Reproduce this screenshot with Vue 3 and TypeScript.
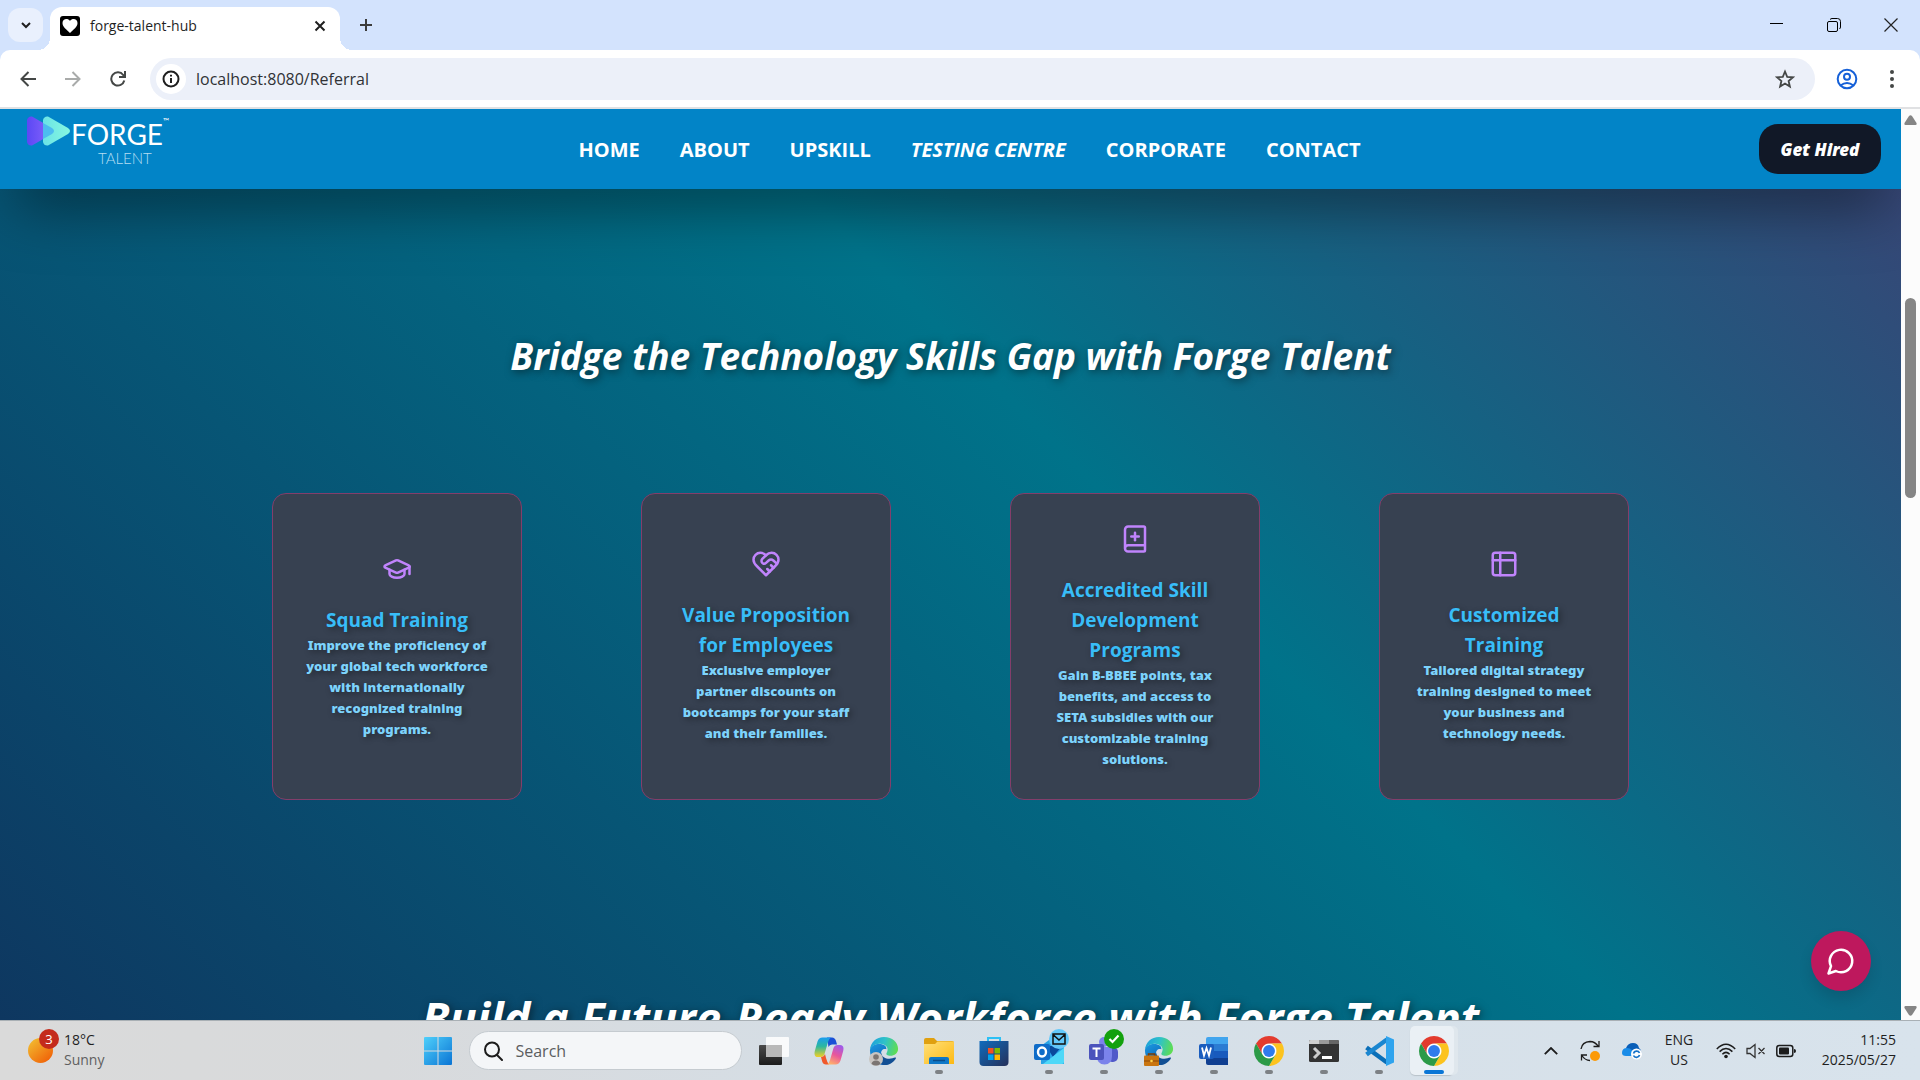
<script setup lang="ts">
import { ref } from 'vue'

interface NavItem {
  label: string
  italic?: boolean
}

interface Benefit {
  icon: 'cap' | 'heart' | 'book' | 'table'
  title: string
  text: string
}

const address = ref('localhost:8080/Referral')
const query = ref('')

const navItems: NavItem[] = [
  { label: 'HOME' },
  { label: 'ABOUT' },
  { label: 'UPSKILL' },
  { label: 'TESTING CENTRE', italic: true },
  { label: 'CORPORATE' },
  { label: 'CONTACT' },
]

const benefits: Benefit[] = [
  {
    icon: 'cap',
    title: 'Squad Training',
    text: 'Improve the proficiency of\nyour global tech workforce\nwith internationally\nrecognized training\nprograms.',
  },
  {
    icon: 'heart',
    title: 'Value Proposition\nfor Employees',
    text: 'Exclusive employer\npartner discounts on\nbootcamps for your staff\nand their families.',
  },
  {
    icon: 'book',
    title: 'Accredited Skill\nDevelopment\nPrograms',
    text: 'Gain B-BBEE points, tax\nbenefits, and access to\nSETA subsidies with our\ncustomizable training\nsolutions.',
  },
  {
    icon: 'table',
    title: 'Customized\nTraining',
    text: 'Tailored digital strategy\ntraining designed to meet\nyour business and\ntechnology needs.',
  },
]
</script>

<template>
  <div class="desktop">
    <svg class="defs" width="0" height="0" aria-hidden="true">
      <defs>
        <linearGradient id="edgeTop" x1="0" y1="0.3" x2="1" y2="0.5">
          <stop offset="0" stop-color="#1ba0dc" />
          <stop offset="0.5" stop-color="#2fc2c8" />
          <stop offset="1" stop-color="#5fdd52" />
        </linearGradient>
        <linearGradient id="edgeLow" x1="0" y1="0" x2="0.6" y2="1">
          <stop offset="0" stop-color="#1c9ae0" />
          <stop offset="1" stop-color="#0a5cb4" />
        </linearGradient>
        <linearGradient id="sun" x1="0.1" y1="0.1" x2="0.8" y2="0.9">
          <stop offset="0" stop-color="#f2b92f" />
          <stop offset="1" stop-color="#f0660a" />
        </linearGradient>
        <linearGradient id="win" x1="0" y1="0" x2="1" y2="1">
          <stop offset="0" stop-color="#4fd0fb" />
          <stop offset="1" stop-color="#0a74d4" />
        </linearGradient>
        <linearGradient id="folder" x1="0" y1="0" x2="1" y2="1">
          <stop offset="0" stop-color="#ffe07a" />
          <stop offset="1" stop-color="#fdb913" />
        </linearGradient>
        <linearGradient id="bag" x1="0" y1="0" x2="1" y2="1">
          <stop offset="0" stop-color="#0f6cbd" />
          <stop offset="1" stop-color="#25305a" />
        </linearGradient>
        <linearGradient id="copA" x1="0" y1="0" x2="0" y2="1">
          <stop offset="0" stop-color="#1b9cf0" />
          <stop offset="0.45" stop-color="#2bb7a0" />
          <stop offset="1" stop-color="#f3d024" />
        </linearGradient>
        <linearGradient id="copB" x1="0.7" y1="0" x2="0.3" y2="1">
          <stop offset="0" stop-color="#a05be8" />
          <stop offset="0.5" stop-color="#e8569b" />
          <stop offset="1" stop-color="#ffb06a" />
        </linearGradient>
        <linearGradient id="dark" x1="0" y1="0" x2="0" y2="1">
          <stop offset="0" stop-color="#4a4a4a" />
          <stop offset="1" stop-color="#1c1c1c" />
        </linearGradient>
        <linearGradient id="violet" x1="0" y1="0" x2="1" y2="0">
          <stop offset="0" stop-color="#5b48f5" />
          <stop offset="1" stop-color="#8d68fb" />
        </linearGradient>
        <linearGradient id="mint" x1="0" y1="0" x2="1" y2="0">
          <stop offset="0" stop-color="#6ae3e6" />
          <stop offset="1" stop-color="#86f8e0" />
        </linearGradient>
      </defs>
      <symbol id="chrome" viewBox="0 0 48 48">
        <circle cx="24" cy="24" r="12" fill="#fff" />
        <path fill="#e33b2e" d="M24 12H44.78A24 24 0 0 0 3.22 12L13.61 30A12 12 0 0 1 24 12Z" />
        <path fill="#fcc31e" d="M34.39 30 24 48A24 24 0 0 0 44.78 12H24A12 12 0 0 1 34.39 30Z" />
        <path fill="#2b9a47" d="M13.61 30 3.22 12A24 24 0 0 0 24 48L34.39 30A12 12 0 0 1 13.61 30Z" />
        <circle cx="24" cy="24" r="9.5" fill="#2f7bec" />
      </symbol>
      <symbol id="edge" viewBox="0 0 32 32">
        <path fill="url(#edgeLow)" d="M1 15C2 10.500 6 8.500 11 8.500C16 8.500 19 11 18.500 14C15 13 12.500 15.500 13 19C14 25 20 27.500 25 27C22.500 30 19 31 16 31C7.500 31 1 24.500 1 15Z" />
        <path fill="#124f94" d="M13 18C13.500 23 20 25.500 25 23.800C27.500 22.800 29.600 22.600 28.400 24.600C25.500 29 20.500 31.500 15 31C11.500 29 9.500 24 13 18Z" />
        <path fill="url(#edgeTop)" d="M1 15C1.500 6.500 8 1 16 1C25 1 31 7 31 13.500C31 18.500 27 21 23 21C19.500 21 17.800 19.600 18.800 18C20 16 20.500 13.500 18.500 11C16.500 8.800 14 8 11 8.200C6 8.500 2.500 11 1 15Z" />
      </symbol>
    </svg>

    <div class="tabstrip">
      <button class="tab-search" aria-label="Search tabs">
        <svg width="12" height="12" viewBox="0 0 12 12" fill="none" stroke="#1f1f1f" stroke-width="2"><path d="M2 4l4 4 4-4" /></svg>
      </button>
      <div class="tab">
        <svg width="20" height="20" viewBox="0 0 20 20">
          <rect width="20" height="20" rx="3" fill="#000" />
          <path fill="#fff" d="M10 17C6.500 13.500 2.500 11 2.500 7C2.500 2.500 8 2 10 5C12 2 17.500 2.500 17.500 7C17.500 11 13.500 13.500 10 17Z" />
        </svg>
        <span class="tab-title">forge-talent-hub</span>
        <button class="icon-button" aria-label="Close tab">
          <svg width="12" height="12" viewBox="0 0 12 12" stroke="#1f1f1f" stroke-width="2"><path d="M1.500 1.500l9 9M10.500 1.500l-9 9" /></svg>
        </button>
      </div>
      <button class="icon-button new-tab" aria-label="New tab">
        <svg width="14" height="14" viewBox="0 0 14 14" stroke="#3c3c3c" stroke-width="2"><path d="M7 1v12M1 7h12" /></svg>
      </button>
      <div class="window-buttons">
        <button class="icon-button" aria-label="Minimize">
          <svg width="14" height="14" viewBox="0 0 14 14" stroke="#000" fill="none"><path d="M0 5.500h13" /></svg>
        </button>
        <button class="icon-button" aria-label="Restore">
          <svg width="14" height="14" viewBox="0 0 14 14" stroke="#000" fill="none"><rect x="0.500" y="3.500" width="10" height="10" rx="1.500" /><path d="M3 1.500Q4 .5 5 .5H10.500Q13.500 .5 13.500 3.500V9Q13.500 10 12.500 11" /></svg>
        </button>
        <button class="icon-button" aria-label="Close">
          <svg width="14" height="14" viewBox="0 0 14 14" stroke="#222" stroke-width="1.200"><path d="M.5 .5l13 13M13.500 .5l-13 13" /></svg>
        </button>
      </div>
    </div>

    <div class="toolbar-back">
      <div class="toolbar">
        <button class="icon-button nav-icon" aria-label="Back">
          <svg width="16" height="16" viewBox="0 0 16 16" fill="none" stroke="#444746" stroke-width="2"><path d="M16 8H2M8.500 1L1.500 8l7 7" /></svg>
        </button>
        <button class="icon-button nav-icon" aria-label="Forward">
          <svg width="16" height="16" viewBox="0 0 16 16" fill="none" stroke="#a9abaa" stroke-width="2"><path d="M0 8h14M7.500 1l7 7-7 7" /></svg>
        </button>
        <button class="icon-button nav-icon" aria-label="Reload">
          <svg width="16" height="16" viewBox="0 0 16 16" fill="none" stroke="#444746" stroke-width="2"><path d="M14.300 9.500A6.600 6.600 0 1 1 13.200 4L15 6" /><path d="M15 0v6H9" /></svg>
        </button>
        <div class="address-bar">
          <button class="site-info" aria-label="Site information">
            <svg width="18" height="18" viewBox="0 0 18 18" fill="none" stroke="#1f1f1f" stroke-width="2"><circle cx="9" cy="9" r="7.500" /><path d="M9 8v5M9 4.800v1.700" /></svg>
          </button>
          <input v-model="address" class="address" type="text" aria-label="Address" />
          <button class="icon-button" aria-label="Bookmark">
            <svg width="20" height="20" viewBox="0 0 20 20" fill="none" stroke="#444746" stroke-width="1.800"><path d="M10 2.500l2.200 5.300 5.700.5-4.300 3.700 1.300 5.600-4.900-3-4.900 3 1.300-5.600-4.300-3.700 5.700-.5z" /></svg>
          </button>
        </div>
        <button class="icon-button profile" aria-label="Profile">
          <svg width="22" height="22" viewBox="0 0 22 22" fill="none" stroke="#1560d8" stroke-width="2"><circle cx="11" cy="11" r="9.300" /><circle cx="11" cy="8.800" r="3" /><path d="M4.500 17.500Q11 12.500 17.500 17.500" /></svg>
        </button>
        <button class="icon-button menu" aria-label="Menu">
          <svg width="4" height="18" viewBox="0 0 4 18" fill="#444746"><circle cx="2" cy="2" r="2" /><circle cx="2" cy="9" r="2" /><circle cx="2" cy="16" r="2" /></svg>
        </button>
      </div>
    </div>

    <div class="viewport">
      <div class="page">
        <header class="site-header">
          <a class="logo" href="#" aria-label="Forge Talent">
            <span class="logo-row">
              <svg width="44" height="30" viewBox="0 0 44 30">
                <path fill="url(#violet)" d="M0 4Q1 0 5 .5L25 12Q29 15 25 18L5 29.500Q1 30 0 26Z" />
                <path fill="url(#mint)" d="M16 4Q17 0 21 .5L41 12Q45 15 41 18L21 29.500Q17 30 16 26Z" />
                <path fill="#4cbcf0" d="M16 7L25 12Q29 15 25 18L16 23Z" />
              </svg>
              <span class="logo-name">FORGE</span>
              <span class="logo-tm">™</span>
            </span>
            <span class="logo-sub">TALENT</span>
          </a>
          <nav class="site-nav">
            <a v-for="item in navItems" :key="item.label" href="#" :class="{ italic: item.italic }">{{ item.label }}</a>
          </nav>
          <button class="hire">Get Hired</button>
        </header>

        <main class="content">
          <h1>Bridge the Technology Skills Gap with Forge Talent</h1>
          <div class="cards">
            <article v-for="b in benefits" :key="b.title" class="card">
              <svg class="card-icon" width="30" height="30" viewBox="0 0 24 24" fill="none" stroke="currentColor" stroke-width="2" stroke-linecap="round" stroke-linejoin="round">
                <g v-if="b.icon === 'cap'">
                  <path d="M21.420 10.922a1 1 0 0 0-.019-1.838L12.830 5.180a2 2 0 0 0-1.660 0L2.600 9.080a1 1 0 0 0 0 1.832l8.570 3.908a2 2 0 0 0 1.660 0z" />
                  <path d="M22 10v6" />
                  <path d="M6 12.500V16a6 3 0 0 0 12 0v-3.500" />
                </g>
                <g v-else-if="b.icon === 'heart'">
                  <path d="M19 14c1.490-1.460 3-3.210 3-5.500A5.500 5.500 0 0 0 16.500 3c-1.760 0-3 .5-4.500 2-1.500-1.500-2.740-2-4.500-2A5.500 5.500 0 0 0 2 8.500c0 2.300 1.500 4.050 3 5.500l7 7Z" />
                  <path d="M12 5 9.040 7.960a2.170 2.170 0 0 0 0 3.080c.82.820 2.130.850 3 .070l2.070-1.900a2.820 2.820 0 0 1 3.790 0l2.960 2.660" />
                  <path d="m18 15-2-2" />
                  <path d="m15 18-2-2" />
                </g>
                <g v-else-if="b.icon === 'book'">
                  <path d="M4 19.500v-15A2.500 2.500 0 0 1 6.500 2H19a1 1 0 0 1 1 1v18a1 1 0 0 1-1 1H6.500a1 1 0 0 1 0-5H20" />
                  <path d="M9 10h6" />
                  <path d="M12 7v6" />
                </g>
                <g v-else>
                  <rect x="3" y="3" width="18" height="18" rx="2" />
                  <path d="M3 9h18M9 3v18" />
                </g>
              </svg>
              <h3>{{ b.title }}</h3>
              <p>{{ b.text }}</p>
            </article>
          </div>
          <h2>Build a Future-Ready Workforce with Forge Talent</h2>
        </main>

        <button class="chat" aria-label="Open chat">
          <svg width="30" height="30" viewBox="0 0 24 24" fill="none" stroke="#fff" stroke-width="2" stroke-linecap="round" stroke-linejoin="round"><path d="M7.900 20A9 9 0 1 0 4 16.100L2 22Z" /></svg>
        </button>
      </div>
      <div class="scrollbar">
        <svg width="13" height="10" viewBox="0 0 13 10" fill="#858585"><path d="M5 1Q6.500 -.5 8 1L12.500 8Q13 10 11.500 10H1.500Q0 10 .5 8Z" /></svg>
        <div class="thumb"></div>
        <svg width="13" height="10" viewBox="0 0 13 10" fill="#858585"><path d="M5 9Q6.500 10.500 8 9L12.500 2Q13 0 11.500 0H1.500Q0 0 .5 2Z" /></svg>
      </div>
    </div>

    <footer class="taskbar">
      <button class="weather">
        <span class="weather-icon">
          <svg width="25" height="25" viewBox="0 0 25 25"><circle cx="12.500" cy="12.500" r="12.500" fill="url(#sun)" /></svg>
          <span class="weather-badge">3</span>
        </span>
        <span class="two-lines"><span>18°C</span><span class="muted">Sunny</span></span>
      </button>

      <div class="apps">
        <button class="app" aria-label="Start">
          <svg width="30" height="30" viewBox="0 0 30 30" fill="url(#win)"><path d="M1 2Q1 1 2 1H14.500V14.500H1ZM15.500 1H28Q29 1 29 2V14.500H15.500ZM1 15.500H14.500V29H2Q1 29 1 28ZM15.500 15.500H29V28Q29 29 28 29H15.500Z" /></svg>
        </button>
        <label class="search">
          <svg width="20" height="20" viewBox="0 0 20 20" fill="none" stroke="#1c1c1c" stroke-width="2" stroke-linecap="round"><circle cx="9" cy="8.500" r="7" /><path d="M14 14l5 5" /></svg>
          <input v-model="query" type="text" placeholder="Search" aria-label="Search" />
        </label>
        <button class="app" aria-label="Task view">
          <svg width="30" height="30" viewBox="0 0 30 30"><rect x="0" y="9" width="23" height="20" rx="1" fill="url(#dark)" /><rect x="7" y="1" width="23" height="20" rx="1" fill="#fff" opacity="0.850" /><rect x="7" y="9" width="16" height="12" fill="#b9b9b9" /></svg>
        </button>
        <button class="app" aria-label="Copilot">
          <svg width="30" height="30" viewBox="0 0 30 30">
            <path fill="#1a50d6" d="M13 1.500H18Q21 1.500 22 5L23 8.500H18Q15.500 8.500 14.500 11Z" />
            <path fill="url(#copA)" d="M8.500 1.500H17Q15 2.500 14 6L10.500 18Q9.500 21 6.500 21H4Q-.5 21 .8 15L3.500 5.500Q4.800 1.500 8.500 1.500Z" />
            <path fill="#f0592b" d="M7 21Q10 21 11 18L12 22Q13 26 15 28.500H12Q9 28.500 8.200 25.500Z" />
            <path fill="url(#copB)" d="M21.500 28.500H13Q15 27.500 16 24L19.500 12Q20.500 9 23.500 9H26Q30.500 9 29.200 15L26.500 24.500Q25.200 28.500 21.500 28.500Z" />
          </svg>
        </button>
        <button class="app" aria-label="Microsoft Edge">
          <svg width="30" height="30" viewBox="0 0 30 30"><use href="#edge" width="30" height="30" /><circle cx="7" cy="23" r="7" fill="#c9c5c1" /><circle cx="7" cy="21" r="2.800" fill="#7b7572" /><path fill="#7b7572" d="M2.500 28Q3 24.500 7 24.500T11.500 28Q7 31 2.500 28Z" /></svg>
        </button>
        <button class="app open" aria-label="File Explorer">
          <svg width="30" height="30" viewBox="0 0 30 30"><path fill="#e0a010" d="M0 4Q0 2 2 2H10L13 5H28Q30 5 30 7V12H0Z" /><path fill="url(#folder)" d="M0 8H11L13.500 5.500H30V28H0Z" /><path fill="#0f78c8" d="M5 28V23Q5 21 7 21H23Q25 21 25 23V28Z" /><path d="M9 24.500h12" stroke="#0a4c8a" stroke-width="1.500" /></svg>
        </button>
        <button class="app" aria-label="Microsoft Store">
          <svg width="30" height="30" viewBox="0 0 30 30"><path d="M9 6V2H21V6" fill="none" stroke="#2cc0f5" stroke-width="2" /><path fill="url(#bag)" d="M.5 5H29.500V26Q29.500 30 25.500 30H4.500Q.5 30 .5 26Z" /><path fill="#f25022" d="M9 12h5.500v5.500H9z" /><path fill="#7fba00" d="M15.500 12H21v5.500h-5.500z" /><path fill="#00a4ef" d="M9 18.500h5.500V24H9z" /><path fill="#ffb900" d="M15.500 18.500H21V24h-5.500z" /></svg>
        </button>
        <button class="app open" aria-label="Outlook">
          <svg width="30" height="30" viewBox="0 0 30 30"><path fill="#2aa4e6" d="M7 10L19 1 30 10V28H7Z" /><path fill="#0a4a9c" d="M12 10H28L19 21Z" /><path fill="#4fd8f8" d="M30 12V26Q30 28 28 28H9Z" /><rect x="0" y="8" width="16" height="16" rx="2" fill="#0f6cc8" /><ellipse cx="8" cy="16" rx="4" ry="4.500" fill="none" stroke="#fff" stroke-width="2.400" /></svg>
          <span class="badge mail"><svg width="14" height="12" viewBox="0 0 14 12" fill="none" stroke="#111" stroke-width="1.500"><path d="M1 1H13V11H1ZM1 1.500L7 7 13 1.500" /></svg></span>
        </button>
        <button class="app open" aria-label="Teams">
          <svg width="30" height="30" viewBox="0 0 30 30"><rect x="18" y="11" width="11" height="15" rx="5" fill="#5059c9" /><circle cx="15" cy="6" r="5" fill="#7b83eb" /><path fill="#7b83eb" d="M8 11H23V20Q23 28.500 15.500 28.500T8 20Z" /><rect x="0" y="8" width="15" height="16" rx="2" fill="#4b53bc" /><path fill="#fff" d="M3.500 11.500h8v2H8.500v7.500H6.500v-7.500h-3z" /></svg>
          <span class="badge ok"><svg width="12" height="10" viewBox="0 0 12 10" fill="none" stroke="#fff" stroke-width="2.200"><path d="M1.500 5l3 3 6-6.500" /></svg></span>
        </button>
        <button class="app open" aria-label="Microsoft Edge work profile">
          <svg width="30" height="30" viewBox="0 0 30 30"><use href="#edge" width="30" height="30" /><path d="M4.500 20v-2h6v2" fill="none" stroke="#7a3e06" stroke-width="1.500" /><rect x="0" y="19.500" width="15" height="10.500" rx="1" fill="#c97510" /><path fill="#8c4b08" d="M0 24.500h15v1H0z" /><circle cx="7.500" cy="25" r="1.300" fill="#ffd24a" /></svg>
        </button>
        <button class="app open" aria-label="Word">
          <svg width="30" height="30" viewBox="0 0 30 30"><path fill="#41a5ee" d="M7 3Q7 1 9 1H29V8H7Z" /><path fill="#2b7cd3" d="M7 8H29V15H7Z" /><path fill="#185abd" d="M7 15H29V22H7Z" /><path fill="#103f91" d="M7 22H29V29H9Q7 29 7 27Z" /><rect x="0" y="8" width="15" height="15" rx="2" fill="#1a5dbe" /><path d="M3 11.500l2 8 2.500-7.500 2.500 7.500 2-8" fill="none" stroke="#fff" stroke-width="1.800" /></svg>
        </button>
        <button class="app open" aria-label="Chrome">
          <svg width="30" height="30"><use href="#chrome" width="30" height="30" /></svg>
        </button>
        <button class="app open" aria-label="Terminal">
          <svg width="30" height="30" viewBox="0 0 30 30"><rect x="0" y="4" width="30" height="22" rx="1.500" fill="#333" /><path fill="#cfcfcf" d="M0 8V5.500Q0 4 1.500 4H10V8Z" /><path fill="#9a9a9a" d="M10 4H20V8H10Z" /><path fill="#666" d="M20 4H28.500Q30 4 30 5.500V8H20Z" /><path d="M5 12l5 5-5 5" fill="none" stroke="#ccc" stroke-width="3" /><path fill="#fff" d="M13 20H23V23H13Z" /></svg>
        </button>
        <button class="app open" aria-label="Visual Studio Code">
          <svg width="30" height="30" viewBox="0 0 30 30"><path d="M2.500 11.500L23 26.500" stroke="#0b6fb8" stroke-width="4.500" /><path d="M2.500 18.500L23 3.500" stroke="#1a86d0" stroke-width="4.500" /><path fill="#2fa4ee" d="M22 0L30 3.500V26.500L22 30Z" /></svg>
        </button>
        <button class="app open current" aria-label="Chrome, forge-talent-hub">
          <svg width="30" height="30"><use href="#chrome" width="30" height="30" /></svg>
        </button>
      </div>

      <div class="tray">
        <button class="icon-button" aria-label="Show hidden icons">
          <svg width="14" height="8" viewBox="0 0 14 8" fill="none" stroke="#1c1c1c" stroke-width="1.800"><path d="M.8 7.200L7 1l6.200 6.200" /></svg>
        </button>
        <button class="icon-button" aria-label="Update">
          <svg width="20" height="22" viewBox="0 0 20 22" fill="none" stroke="#1c1c1c" stroke-width="1.300"><path d="M1 9Q2 2 10 1.500Q15 1.500 18.500 6.500M19 1v5.500h-5.500M1.500 20.500V15H7M1.500 15Q5 20.500 10 20.500" /><circle cx="15" cy="16" r="5" fill="#fb9a08" stroke="none" /></svg>
        </button>
        <button class="icon-button" aria-label="OneDrive">
          <svg width="20" height="18" viewBox="0 0 20 18"><path fill="#0a5fb8" d="M4 6Q6 1 11 1T17 6Q20 8 19 12H4Z" /><path fill="#1a8ce8" d="M0 11Q0 6 5 6Q8 6 10 8L16 14H4Q0 14 0 11Z" /><circle cx="14.500" cy="12" r="5.500" fill="#fff" /><path d="M11.500 11.500A3.200 3.200 0 0 1 17.500 11M17.500 13A3.200 3.200 0 0 1 11.500 13.500" fill="none" stroke="#1672c8" stroke-width="1.700" /></svg>
        </button>
        <button class="two-lines language"><span>ENG</span><span>US</span></button>
        <button class="quick" aria-label="Network, volume, battery">
          <svg width="20" height="16" viewBox="0 0 20 16" fill="none" stroke="#1c1c1c" stroke-width="1.500"><path d="M.8 6Q10-3.500 19.200 6M3.600 8.600Q10 2.200 16.400 8.600M6.400 11.200Q10 7.600 13.600 11.200" /><circle cx="10" cy="13.500" r="1.800" fill="#1c1c1c" stroke="none" /></svg>
          <svg width="20" height="16" viewBox="0 0 20 16" fill="none" stroke="#333" stroke-width="1.300"><path d="M1 5.500H4L9 1.500V14.500L4 10.500H1ZM12.500 5l6 6M18.500 5l-6 6" /></svg>
          <svg width="20" height="14" viewBox="0 0 20 14"><rect x="0.800" y="1.500" width="16" height="11" rx="2.500" fill="none" stroke="#1c1c1c" stroke-width="1.500" /><rect x="3" y="3.500" width="10" height="7" rx="1" fill="#1c1c1c" /><path fill="#1c1c1c" d="M18 5Q20 5 20 7T18 9Z" /></svg>
        </button>
        <button class="two-lines clock"><span>11:55</span><span>2025/05/27</span></button>
      </div>
    </footer>
  </div>
</template>

<style>
body {
  margin: 0;
  overflow: hidden;
}
</style>

<style scoped>
* {
  box-sizing: border-box;
}

button {
  padding: 0;
  border: 0;
  background: none;
  color: inherit;
  font: inherit;
}

input {
  padding: 0;
  border: 0;
  outline: 0;
  background: none;
  font: inherit;
}

a {
  color: inherit;
  text-decoration: none;
}

svg {
  display: block;
  flex: none;
}

.defs {
  position: absolute;
}

.desktop {
  display: flex;
  flex-direction: column;
  height: 100vh;
  font-family: 'Open Sans', 'Noto Sans', sans-serif;
  color: #1f1f1f;
}

.icon-button {
  display: flex;
  align-items: center;
  justify-content: center;
}

/* Browser frame */
.tabstrip {
  display: flex;
  align-items: flex-end;
  height: 50px;
  padding-left: 8px;
  background: #d3e3fd;
}

.tab-search {
  display: flex;
  align-items: center;
  justify-content: center;
  width: 35px;
  height: 34px;
  margin: 0 7px 8px 0;
  border-radius: 12px;
  background: #e9f0fd;
}

.tab {
  position: relative;
  display: flex;
  align-items: center;
  gap: 10px;
  width: 290px;
  height: 43px;
  padding: 0 14px 6px 10px;
  border-radius: 12px 12px 0 0;
  background: #fff;
  font-size: 14px;
}

/* Flared feet where the tab meets the toolbar */
.tab::before,
.tab::after {
  position: absolute;
  bottom: 0;
  width: 12px;
  height: 12px;
  content: '';
}

.tab::before {
  right: 100%;
  background: radial-gradient(circle at 0 0, transparent 12px, #fff 12px);
}

.tab::after {
  left: 100%;
  background: radial-gradient(circle at 100% 0, transparent 12px, #fff 12px);
}

.tab-title {
  flex: 1;
}

.new-tab {
  width: 34px;
  height: 34px;
  margin: 0 0 8px 9px;
}

.window-buttons {
  display: flex;
  gap: 43px;
  margin: 0 22px 18px auto;
}

.toolbar-back {
  background: #d3e3fd;
}

.toolbar {
  display: flex;
  align-items: center;
  height: 59px;
  padding-left: 5px;
  border-bottom: 2px solid #e0e1e3;
  border-radius: 10px 10px 0 0;
  background: #fff;
}

.nav-icon {
  width: 45px;
  height: 40px;
}

.address-bar {
  display: flex;
  flex: 1;
  align-items: center;
  height: 42px;
  margin-left: 10px;
  padding: 0 20px 0 6px;
  border-radius: 21px;
  background: #ecf0f9;
}

.site-info {
  display: flex;
  align-items: center;
  justify-content: center;
  width: 30px;
  height: 30px;
  margin-right: 10px;
  border-radius: 50%;
  background: #fff;
}

.address {
  flex: 1;
  color: #303236;
  font-size: 16px;
}

.profile {
  margin-left: 21px;
}

.menu {
  margin: 0 26px 0 32px;
}

/* Web page */
.viewport {
  display: flex;
  flex: 1;
  min-height: 0;
}

.page {
  position: relative;
  flex: 1;
  overflow: hidden;
  background: linear-gradient(45deg, #0e3760 0%, #00738a 58%, #3a4475 100%);
  color: #fff;
}

.site-header {
  position: relative;
  display: flex;
  align-items: center;
  justify-content: space-between;
  height: 80px;
  padding: 0 20px;
  background: #0284c7;
  box-shadow: 0 30px 60px -15px rgba(0, 0, 0, 0.5);
}

.logo {
  display: flex;
  flex-direction: column;
  align-self: flex-start;
  gap: 4px;
  width: 160px;
  padding: 7px 0 0 7px;
  font-family: Lato, sans-serif;
}

.logo-row {
  display: flex;
  height: 30px;
}

.logo-name {
  font-size: 28px;
  font-weight: 400;
  line-height: 36px;
}

.logo-tm {
  font-size: 8px;
  line-height: 10px;
}

.logo-sub {
  padding-left: 71px;
  color: #b5def2;
  font-size: 15px;
  font-weight: 300;
  line-height: 16px;
}

.site-nav {
  display: flex;
  gap: 40px;
  font-size: 20px;
  font-weight: 700;
}

.italic {
  font-style: italic;
}

.hire {
  width: 122px;
  height: 50px;
  border-radius: 19px;
  background: #111827;
  font-family: 'Noto Sans', 'Open Sans', sans-serif;
  font-size: 17px;
  font-style: italic;
  font-weight: 900;
}

.content {
  display: flex;
  flex-direction: column;
  align-items: center;
  padding-top: 143px;
}

h1,
h2 {
  margin: 0;
  font-style: italic;
  font-weight: 700;
  white-space: nowrap;
  text-shadow: 2px 2px 8px rgba(0, 0, 0, 0.5);
}

h1 {
  font-size: 37px;
  line-height: 48px;
}

h2 {
  font-size: 45px;
  line-height: 60px;
}

.cards {
  display: flex;
  justify-content: space-between;
  width: 100%;
  max-width: 1357px;
  margin: 113px 0 188px;
}

.card {
  display: flex;
  flex-direction: column;
  align-items: center;
  justify-content: center;
  width: 250px;
  height: 307px;
  border: 1px solid #833e6b;
  border-radius: 14px;
  background: #374151;
  text-align: center;
  text-shadow: 2px 2px 6px rgba(0, 0, 0, 0.4);
  white-space: pre-line;
}

.card-icon {
  margin-bottom: 21px;
  color: #c084fc;
}

h3 {
  margin: 0;
  color: #38bdf8;
  font-size: 19px;
  font-weight: 700;
  line-height: 30px;
}

p {
  margin: 0;
  color: #7dd3fc;
  font-family: 'Noto Sans', 'Open Sans', sans-serif;
  font-size: 13px;
  font-weight: 900;
  line-height: 21px;
}

.chat {
  position: absolute;
  right: 30px;
  bottom: 29px;
  display: flex;
  align-items: center;
  justify-content: center;
  width: 60px;
  height: 60px;
  border-radius: 50%;
  background: #be185d;
  box-shadow: 0 8px 14px rgba(0, 0, 0, 0.12);
}

.scrollbar {
  display: flex;
  flex-direction: column;
  align-items: center;
  justify-content: space-between;
  width: 19px;
  padding: 6px 0 4px;
  background: #fcfcfc;
}

.thumb {
  width: 11px;
  height: 200px;
  margin: 173px 0 auto;
  border-radius: 6px;
  background: #858585;
}

/* Taskbar */
.taskbar {
  display: grid;
  grid-template-columns: 410fr auto 458fr;
  height: 60px;
  border-top: 1px solid #a9b0b5;
  background: linear-gradient(90deg, #dadada, #d8dadc 20%, #d5dee6 45%, #d8e3ec);
  font-size: 14px;
}

.weather {
  display: flex;
  align-items: center;
  gap: 11px;
  padding-left: 28px;
}

.weather-icon {
  position: relative;
}

.weather-badge {
  position: absolute;
  top: -9px;
  left: 11px;
  width: 20px;
  height: 20px;
  border-radius: 50%;
  background: #c42b1c;
  color: #fff;
  font-size: 13px;
  line-height: 20px;
}

.two-lines {
  display: flex;
  flex-direction: column;
  justify-content: center;
  padding-bottom: 2px;
  text-align: left;
  line-height: 20px;
}

.muted {
  color: #5f5f5f;
}

.apps {
  display: flex;
  align-items: center;
}

.app {
  position: relative;
  display: flex;
  align-items: center;
  justify-content: center;
  width: 55px;
  height: 59px;
}

.open::after {
  position: absolute;
  bottom: 6px;
  left: 24px;
  width: 8px;
  height: 4px;
  border-radius: 2px;
  background: #7d8185;
  content: '';
}

.current::before {
  position: absolute;
  top: 5px;
  left: 4px;
  width: 44px;
  height: 49px;
  border-radius: 5px;
  background: #eaf0f5;
  box-shadow: 4px 0 0 #dfe7ed, 0 1px 1px #b9c2c9;
  content: '';
}

.current svg {
  position: relative;
}

.current::after {
  left: 18px;
  width: 20px;
  background: #0a76d6;
}

.badge {
  position: absolute;
  top: 8px;
  right: 7px;
  display: flex;
  align-items: center;
  justify-content: center;
  width: 20px;
  height: 20px;
  border-radius: 50%;
}

.mail {
  background: #63c8fb;
}

.ok {
  background: #13a10e;
}

.search {
  display: flex;
  align-items: center;
  gap: 12px;
  width: 273px;
  height: 39px;
  margin: 0 4px;
  padding: 0 13px;
  border: 1px solid #c5cbd0;
  border-radius: 20px;
  background: #f4f6f8;
  font-size: 16px;
}

.search input {
  flex: 1;
  min-width: 0;
}

.search input::placeholder {
  color: #5b5d5f;
  opacity: 1;
}

.tray {
  display: flex;
  align-items: center;
  justify-content: flex-end;
  gap: 22px;
  padding-right: 24px;
}

.language {
  width: 30px;
  text-align: center;
}

.quick {
  display: flex;
  align-items: center;
  gap: 10px;
}

.clock {
  width: 78px;
  text-align: right;
}
</style>
